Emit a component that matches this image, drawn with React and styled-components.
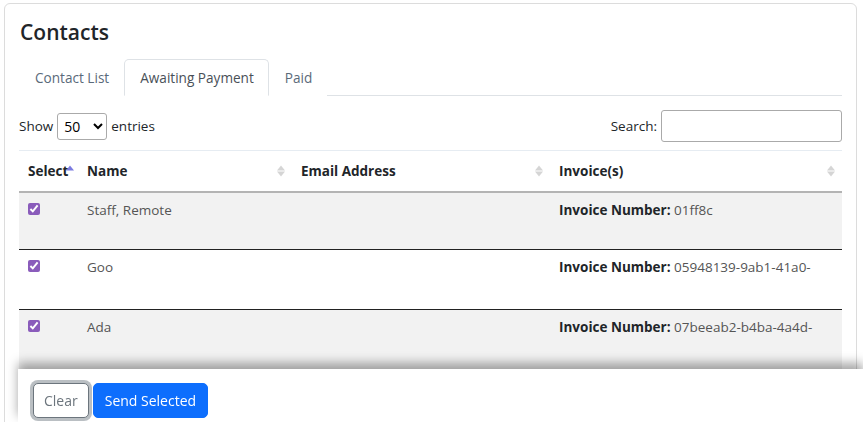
import styled, { createGlobalStyle } from "styled-components";

const GlobalStyle = createGlobalStyle`
  body {
    margin: 0;
    font-family: "Open Sans", "Noto Sans", sans-serif;
    font-size: 14px;
    color: #212529;
    background: #fff;
  }
`;

const Page = styled.div`
  padding: 3px 6px 0 4px;
`;

const Card = styled.div`
  border: 1px solid #dcdcdc;
  border-radius: 6px;
  padding: 12px 14px 80px;
`;

const Title = styled.h3`
  margin: 0 0 11px 1px;
  font-size: 21px;
  font-weight: 600;
  line-height: 32px;
`;

const Tabs = styled.ul`
  display: flex;
  list-style: none;
  margin: 0;
  padding: 0;
  border-bottom: 1px solid #dee2e6;
`;

const Tab = styled.li`
  padding: 8px 14px 8px 15px;
  margin-bottom: -1px;
  font-size: 13.6px;
  color: ${(p) => (p.$active ? "#495057" : "#5a6a7a")};
  background: #fff;
  border: 1px solid ${(p) => (p.$active ? "#dee2e6" : "transparent")};
  border-bottom-color: ${(p) => (p.$active ? "#fff" : "transparent")};
  border-radius: 5px 5px 0 0;
`;

const Controls = styled.div`
  display: flex;
  justify-content: space-between;
  align-items: center;
  padding: 14px 0 8px;
  font-size: 13.5px;
`;

const Group = styled.label`
  display: flex;
  align-items: center;
  gap: 4px;
`;

const Select = styled.select`
  width: 50px;
  height: 27px;
  font-family: inherit;
  font-size: 14px;
  border: 1px solid #aaa;
  border-radius: 3px;
  background: #fff;
  padding: 0 2px;
`;

const SearchInput = styled.input`
  width: 181px;
  height: 32px;
  box-sizing: border-box;
  border: 1px solid #aaa;
  border-radius: 3px;
`;

const Table = styled.table`
  width: 100%;
  border-collapse: collapse;
  border-top: 1px solid #e6ecf2;
  table-layout: fixed;
`;

const Th = styled.th`
  position: relative;
  text-align: left;
  font-weight: 700;
  font-size: 13.5px;
  padding: 0 9px;
  height: 40px;
  border-bottom: 2px solid #b4b4b4;
  color: #212529;
`;

const SortIcon = styled.span`
  position: absolute;
  right: ${(p) => (p.$inline ? "4px" : "7px")};
  top: 50%;
  transform: translateY(-50%);
  display: flex;
  flex-direction: column;
  gap: 1px;
  & i {
    width: 0;
    height: 0;
    border-left: 4px solid transparent;
    border-right: 4px solid transparent;
  }
`;

const Up = styled.i`
  border-bottom: 5px solid ${(p) => (p.$on ? "#7b7be0" : "#d5d5d5")};
`;

const Down = styled.i`
  border-top: 5px solid ${(p) => (p.$on ? "#7b7be0" : "#d5d5d5")};
  opacity: ${(p) => (p.$hidden ? 0 : 1)};
`;

const Tr = styled.tr`
  background: ${(p) => (p.$odd ? "#f2f2f2" : "#fff")};
  & td {
    border-bottom: 1px solid #222;
  }
`;

const Td = styled.td`
  vertical-align: top;
  padding: 8px 9px 0;
  height: ${(p) => p.$h}px;
  box-sizing: border-box;
  color: #555;
  font-size: 13.5px;
  white-space: nowrap;
  overflow: hidden;
`;

const Check = styled.input`
  margin: 1px 0 0;
  width: 12px;
  height: 12px;
  accent-color: #8a5cbb;
`;

const Label = styled.b`
  color: #212529;
`;

const Footer = styled.div`
  position: fixed;
  left: 18px;
  right: 0;
  bottom: 0;
  height: 53px;
  background: #fff;
  box-shadow: 0 -6px 10px rgba(0, 0, 0, 0.35);
  display: flex;
  align-items: flex-start;
  gap: 3px;
  padding: 14px 0 0 15px;
  box-sizing: border-box;
`;

const Button = styled.button`
  font-family: inherit;
  font-size: 14px;
  height: 35px;
  padding: 0 ${(p) => (p.$outline ? "10px" : "11px")};
  border-radius: 5px;
  border: 1px solid ${(p) => (p.$outline ? "#6c757d" : "#0d6efd")};
  background: ${(p) => (p.$outline ? "#fff" : "#0d6efd")};
  color: ${(p) => (p.$outline ? "#6c757d" : "#fff")};
  box-shadow: ${(p) => (p.$outline ? "0 0 0 3px rgba(130,138,145,0.55)" : "none")};
  margin-left: ${(p) => (p.$outline ? "0" : "1px")};
`;

const rows = [
  { name: "Staff, Remote", invoice: "01ff8c", h: 57 },
  { name: "Goo", invoice: "05948139-9ab1-41a0-", h: 60 },
  { name: "Ada", invoice: "07beeab2-b4ba-4a4d-", h: 60 },
];

const Sort = ({ active }) => (
  <SortIcon $inline={active}>
    <Up $on={active} />
    <Down $hidden={active} />
  </SortIcon>
);

export default function App() {
  return (
    <Page>
      <GlobalStyle />
      <Card>
        <Title>Contacts</Title>
        <Tabs>
          <Tab>Contact List</Tab>
          <Tab $active>Awaiting Payment</Tab>
          <Tab>Paid</Tab>
        </Tabs>
        <Controls>
          <Group>
            Show
            <Select defaultValue="50">
              <option>10</option>
              <option>25</option>
              <option>50</option>
              <option>100</option>
            </Select>
            entries
          </Group>
          <Group>
            Search:
            <SearchInput type="search" />
          </Group>
        </Controls>
        <Table>
          <colgroup>
            <col style={{ width: 59 }} />
            <col style={{ width: 214 }} />
            <col style={{ width: 258 }} />
            <col />
          </colgroup>
          <thead>
            <tr>
              <Th>Select<Sort active /></Th>
              <Th>Name<Sort /></Th>
              <Th>Email Address<Sort /></Th>
              <Th>Invoice(s)<Sort /></Th>
            </tr>
          </thead>
          <tbody>
            {rows.map((r, i) => (
              <Tr key={r.name} $odd={i % 2 === 0}>
                <Td $h={r.h}><Check type="checkbox" defaultChecked /></Td>
                <Td $h={r.h}>{r.name}</Td>
                <Td $h={r.h}></Td>
                <Td $h={r.h}><Label>Invoice Number:</Label> {r.invoice}</Td>
              </Tr>
            ))}
          </tbody>
        </Table>
      </Card>
      <Footer>
        <Button $outline>Clear</Button>
        <Button>Send Selected</Button>
      </Footer>
    </Page>
  );
}
